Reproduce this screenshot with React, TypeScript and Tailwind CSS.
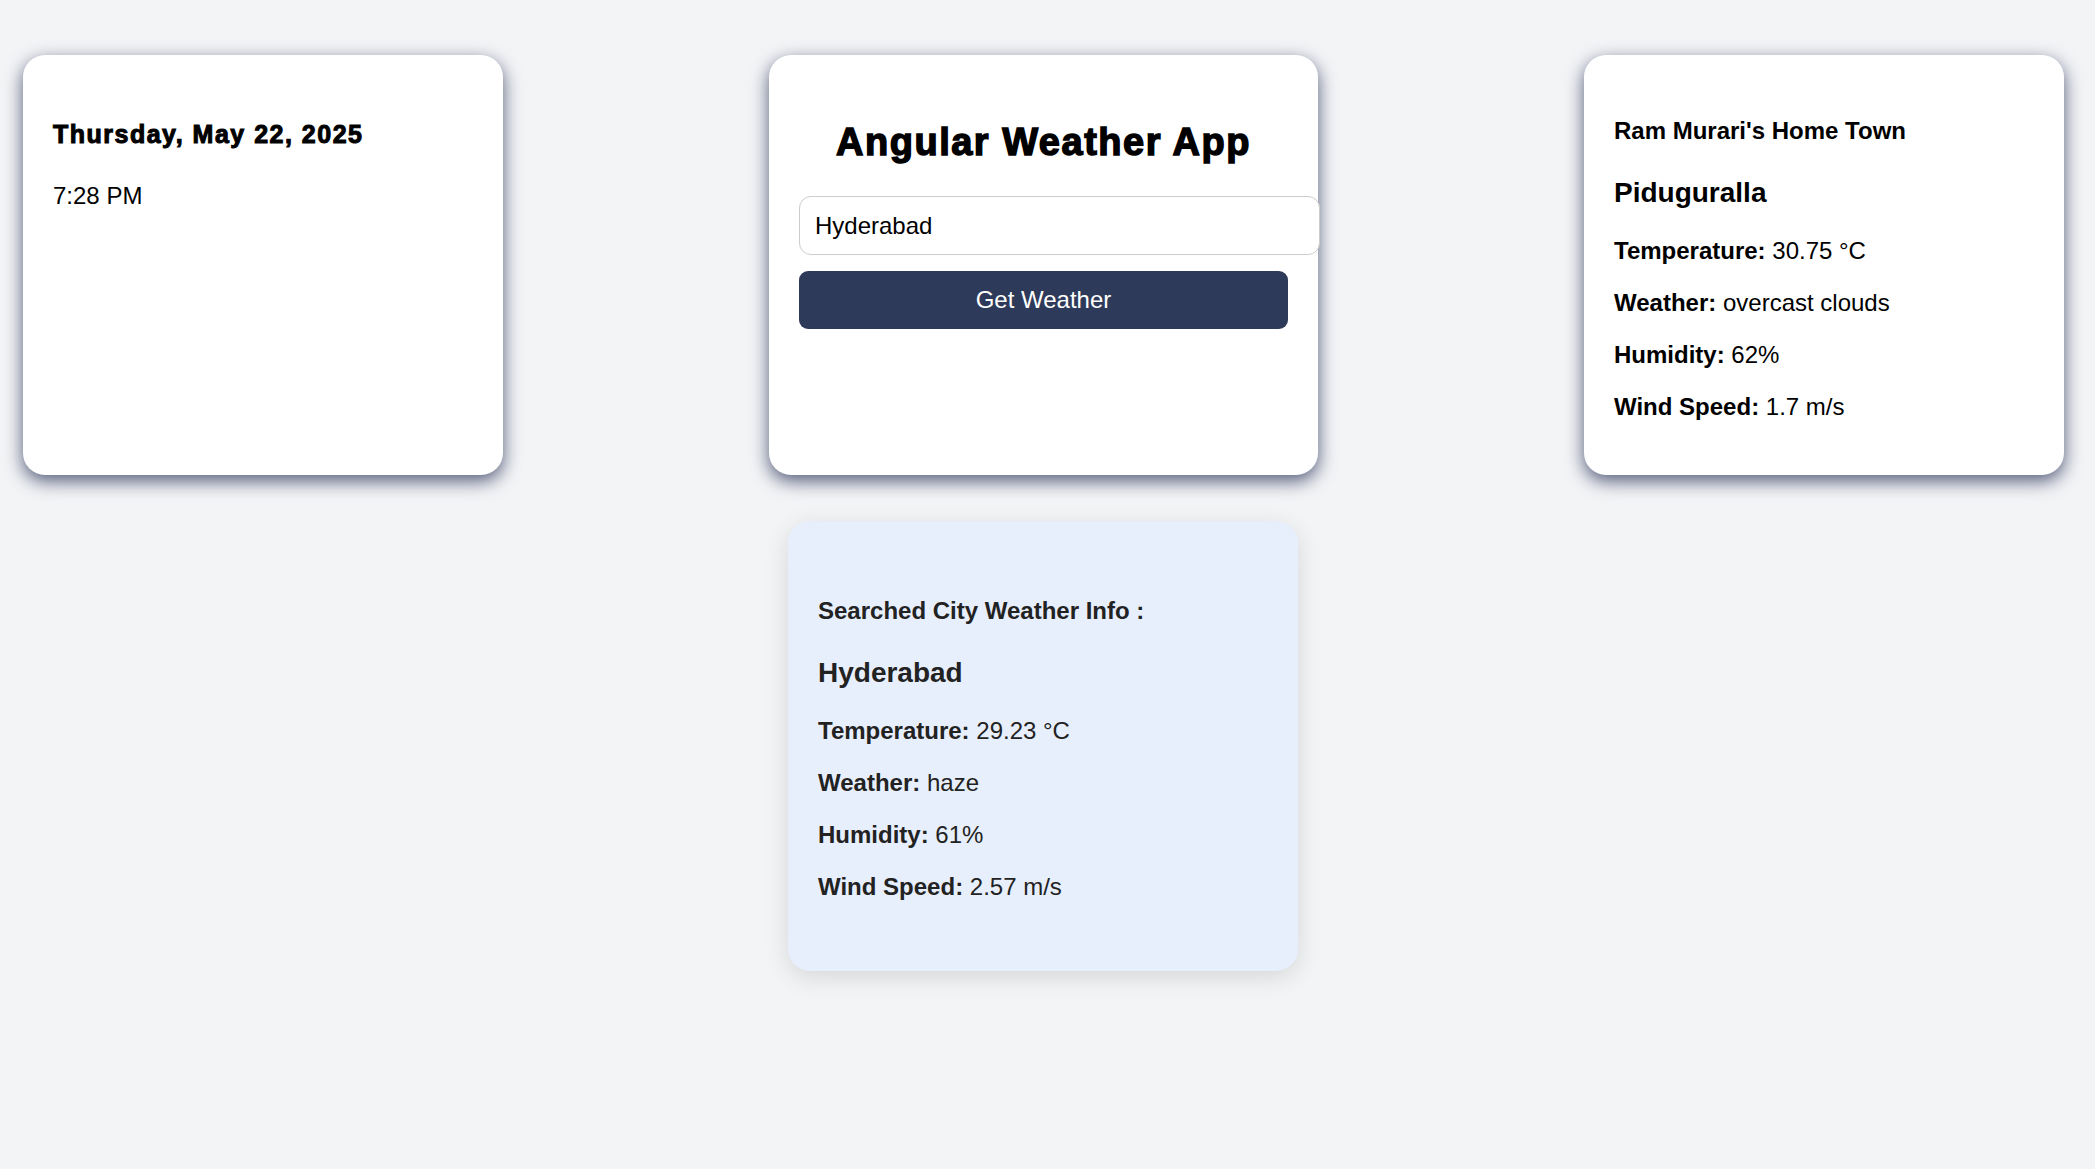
import React from 'react';

interface WeatherInfo {
  city: string;
  temp: string;
  weather: string;
  humidity: string;
  wind: string;
}

const hometown: WeatherInfo = {
  city: 'Piduguralla',
  temp: '30.75 °C',
  weather: 'overcast clouds',
  humidity: '62%',
  wind: '1.7 m/s',
};

const searched: WeatherInfo = {
  city: 'Hyderabad',
  temp: '29.23 °C',
  weather: 'haze',
  humidity: '61%',
  wind: '2.57 m/s',
};

const Row: React.FC<{ label: string; value: string }> = ({ label, value }) => (
  <p className="my-[24px] text-[24px] leading-[normal]">
    <strong className="font-bold">{label}:</strong> {value}
  </p>
);

const WeatherDetails: React.FC<{ info: WeatherInfo }> = ({ info }) => (
  <>
    <h3 className="my-[28px] text-[28px] font-bold leading-[normal]">{info.city}</h3>
    <Row label="Temperature" value={info.temp} />
    <Row label="Weather" value={info.weather} />
    <Row label="Humidity" value={info.humidity} />
    <Row label="Wind Speed" value={info.wind} />
  </>
);

const topCard =
  'rounded-[22px] bg-white shadow-[0_6px_18px_rgba(30,40,80,0.75)]';

const App: React.FC = () => {
  return (
    <div className="min-h-screen bg-[#f3f4f6] font-['Liberation_Sans',Arial,sans-serif] text-black">
      <div className="flex justify-between pl-[23px] pr-[31px] pt-[55px]">
        {/* date / time */}
        <div className={`${topCard} w-[480px] p-[30px]`}>
          <h4 className="mt-[35px] text-[25px] font-bold leading-[normal] tracking-[1.5px] [-webkit-text-stroke:1px_black]">
            Thursday, May 22, 2025
          </h4>
          <p className="mt-[33px] text-[24px] leading-[normal]">7:28 PM</p>
        </div>

        {/* search */}
        <div className={`${topCard} w-[549px] px-[30px] pt-[30px]`}>
          <h2 className="mt-[36px] mb-[32px] text-center text-[38px] font-bold leading-[normal] tracking-[1.5px] [-webkit-text-stroke:1.4px_black]">
            Angular Weather App
          </h2>
          <input
            type="text"
            defaultValue="Hyderabad"
            className="block box-content h-[27px] w-full rounded-[12px] border border-[#ccc] bg-white px-[15px] py-[15px] text-[24px] leading-[27px] text-black outline-none"
          />
          <button className="mt-[16px] block h-[58px] w-full rounded-[9px] bg-[#2e3a59] text-[24px] text-white">
            Get Weather
          </button>
        </div>

        {/* home town */}
        <div className={`${topCard} w-[480px] p-[30px]`}>
          <h4 className="my-[32px] text-[24px] font-bold leading-[normal]">Ram Murari's Home Town</h4>
          <WeatherDetails info={hometown} />
        </div>
      </div>

      <div className="flex justify-center pl-[23px] pr-[32px] pt-[46px]">
        <div className="w-[510px] rounded-[22px] bg-[#e8effc] px-[30px] pt-[44px] pb-[46px] text-[#222] shadow-[0_6px_24px_rgba(0,0,0,0.12)]">
          <h4 className="my-[32px] text-[24px] font-bold leading-[normal]">Searched City Weather Info :</h4>
          <WeatherDetails info={searched} />
        </div>
      </div>
    </div>
  );
};

export default App;
